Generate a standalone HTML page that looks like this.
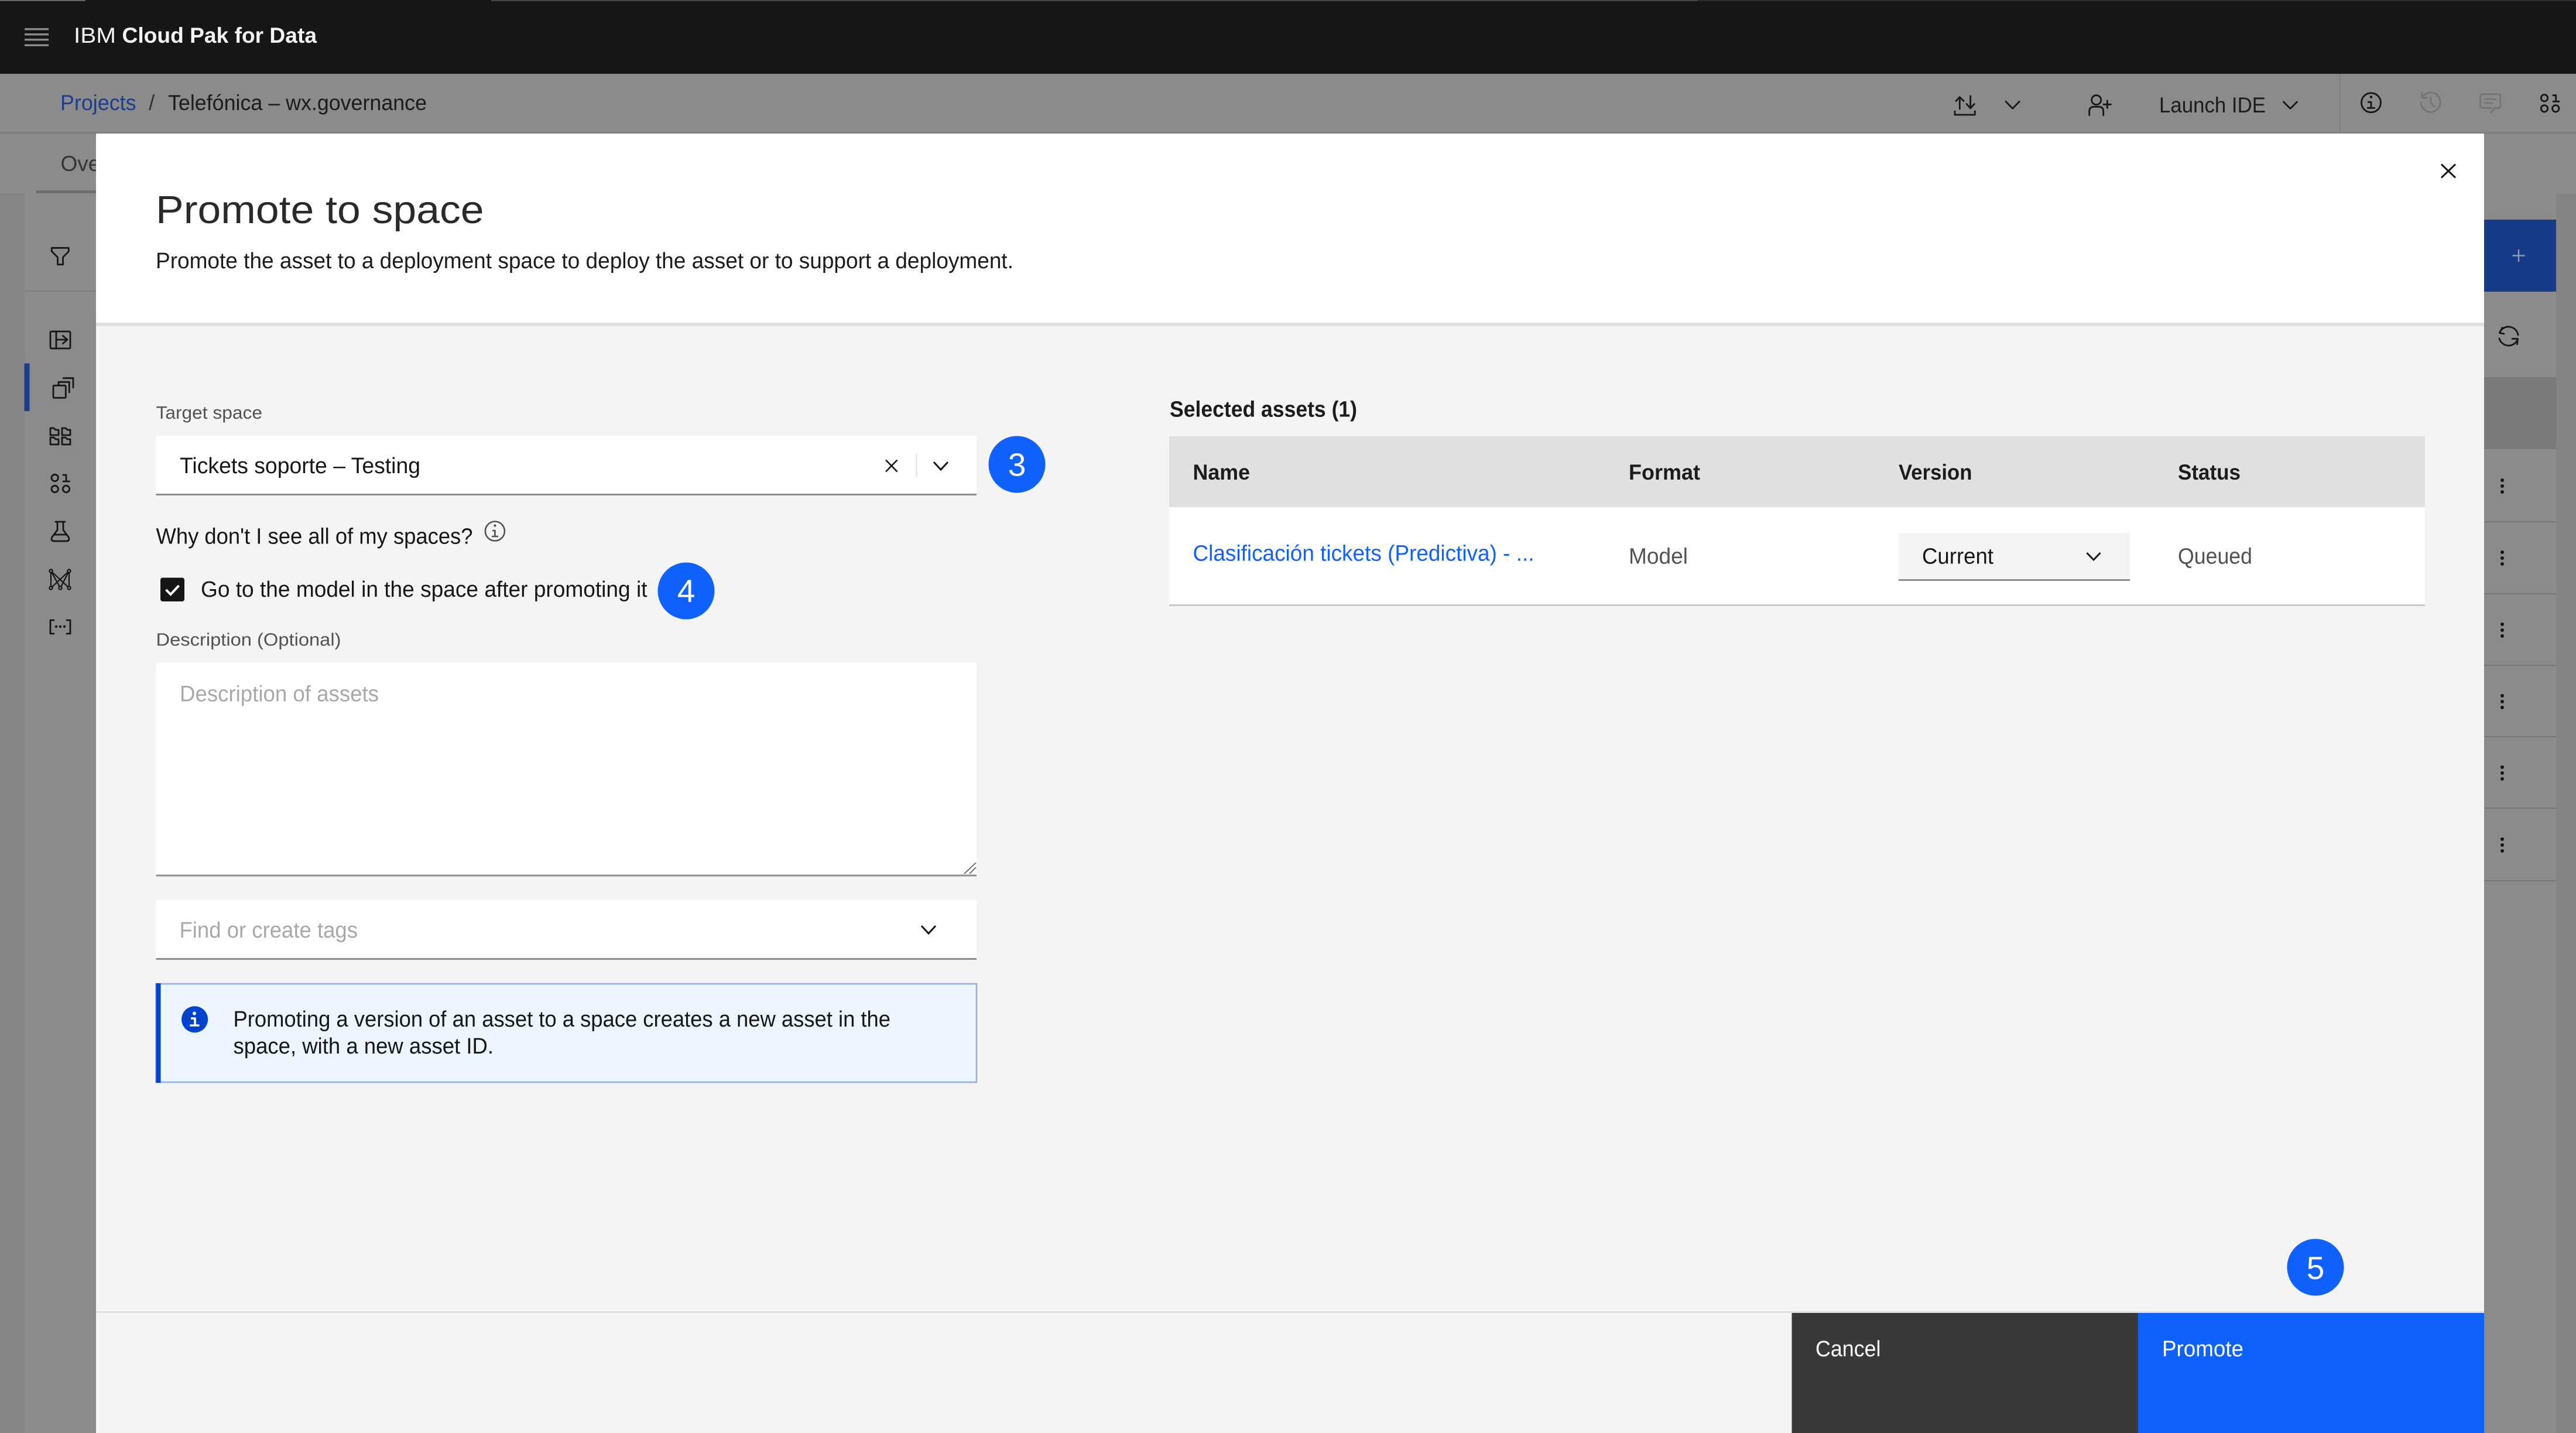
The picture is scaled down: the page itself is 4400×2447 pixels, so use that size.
<!DOCTYPE html>
<html lang="en">
<head>
<meta charset="utf-8">
<title>Promote to space</title>
<style>
html,body{margin:0;padding:0;background:#8b8b8b;width:4400px;height:2447px;overflow:hidden}
svg{display:block;font-family:"Liberation Sans",Arial,sans-serif}
.i{fill:none;stroke:#161616;stroke-width:2.8;stroke-linecap:round;stroke-linejoin:round}
.g{fill:none;stroke:#747474;stroke-width:2.8;stroke-linecap:round;stroke-linejoin:round}
text{white-space:pre}
</style>
</head>
<body>
<svg xmlns="http://www.w3.org/2000/svg" width="4400" height="2447" viewBox="0 0 4400 2447">
<!-- page background -->
<rect width="4400" height="2447" fill="#8b8b8b"/>
<rect x="0" y="330" width="41" height="2117" fill="#858585"/>
<rect x="4366" y="330" width="34" height="2117" fill="#848484"/>

<!-- top header -->
<rect width="4400" height="126" fill="#161616"/>
<rect x="0" y="0" width="146" height="2" fill="#666"/>
<rect x="839" y="0" width="2061" height="2" fill="#444"/>
<rect x="2900" y="0" width="1500" height="2" fill="#2c2c2c"/>
<g fill="#8a8a8a">
<rect x="42" y="48" width="41" height="3.5"/>
<rect x="42" y="57" width="41" height="3.5"/>
<rect x="42" y="66" width="41" height="3.5"/>
<rect x="42" y="75.5" width="41" height="3.5"/>
</g>
<text x="126" y="73" font-size="37" fill="#f4f4f4" textLength="72" lengthAdjust="spacingAndGlyphs">IBM</text>
<text x="208.5" y="73" font-size="37" font-weight="700" fill="#f4f4f4" textLength="332.5" lengthAdjust="spacingAndGlyphs">Cloud Pak for Data</text>

<!-- breadcrumb bar -->
<rect x="0" y="225.5" width="4400" height="3" fill="#7c7c7c"/>
<rect x="3996" y="126" width="2" height="100" fill="#7f7f7f"/>
<text x="103" y="188" font-size="37" fill="#1b3f8e" textLength="129.5" lengthAdjust="spacingAndGlyphs">Projects</text>
<text x="254" y="188" font-size="37" fill="#333">/</text>
<text x="287" y="188" font-size="37" fill="#1c1c1c" textLength="442" lengthAdjust="spacingAndGlyphs">Telefónica – wx.governance</text>

<!-- toolbar icons -->
<path class="i" d="M3347.3 186V166M3341 172.5L3347.3 165.7L3354 172.5M3365.7 164V185M3359 177.5L3365.7 185L3372.3 177.5M3339 190V196H3373.3V190"/>
<path class="i" d="M3426 173.3L3437.7 185.3L3449.3 173.3"/>
<circle class="i" cx="3580.7" cy="170.7" r="8"/>
<path class="i" d="M3568.7 196.7V190Q3568.7 182.3 3577 182.3H3584.5Q3592.7 182.3 3592.7 190V196.7M3593 178.3H3605.5M3599.3 172V184.5"/>
<text x="3688" y="192" font-size="37" fill="#1c1c1c" textLength="182" lengthAdjust="spacingAndGlyphs">Launch IDE</text>
<path class="i" d="M3900.5 174L3912 185.5L3923.5 174"/>

<circle class="i" cx="4050" cy="175.3" r="16.5"/>
<circle cx="4050" cy="165.7" r="2.2" fill="#161616"/>
<path class="i" d="M4045.3 174.3H4050V184.3M4044.3 184.3H4055.7"/>

<path class="g" d="M4138.3 165A16.5 16.5 0 1 1 4135.2 175.3M4137 158V167H4145M4151.7 166.5V175L4157.7 181.7"/>
<path class="g" d="M4255.5 184.3H4239.5Q4236.7 184.3 4236.7 181.6V163.7Q4236.7 161 4239.5 161H4268Q4270.7 161 4270.7 163.7V181.6Q4270.7 184.3 4268 184.3H4260.7L4255 192.3M4244 169H4263M4244 176H4256"/>

<circle class="i" cx="4346" cy="167.3" r="5.7"/>
<circle class="i" cx="4346" cy="185.3" r="5.7"/>
<circle class="i" cx="4365.3" cy="185.3" r="5.7"/>
<path class="i" d="M4361 162.7H4365.7V173.3M4361 173.3H4371"/>

<!-- tabs -->
<text x="103.5" y="292" font-size="37" fill="#353535">Overview</text>
<rect x="62" y="325" width="102" height="5" fill="#6e6e6e"/>

<!-- left rail -->
<rect x="41" y="496" width="123" height="2" fill="#7f7f7f"/>
<path class="i" d="M88.3 423.3H117.3V429.3L107.5 439.3V451.7H98.5V439.3L88.3 429.3Z"/>
<rect x="41.5" y="620.5" width="9" height="81.5" fill="#1a3e8c"/>
<rect class="i" x="86" y="566" width="34" height="29" rx="1.5"/>
<path class="i" d="M96 566V595M96.7 580H115M107.3 573.3L115 580L107.3 586.7"/>
<rect class="i" x="91" y="658.3" width="21.3" height="21" rx="1.5"/>
<path class="i" d="M100 658V652.3H118.3V670M108.3 645.7H125V661.7"/>
<path class="i" d="M86 743V731H92L95 734H100V743ZM106 743V731H112L115 734H120V743ZM86 759V747H92L95 750H100V759ZM106 759V747H112L115 750H120V759Z"/>
<circle class="i" cx="93.7" cy="816" r="5.7"/>
<circle class="i" cx="93.7" cy="835" r="5.7"/>
<circle class="i" cx="113" cy="835" r="5.7"/>
<path class="i" d="M108 811H113V822M108 822H118.5"/>
<path class="i" d="M95 891H111M98 891V905L89 917Q86 924 93 924H113Q120 924 117 917L108 905V891M92 913H114"/>
<path class="i" style="stroke-width:2.2" d="M87 975V1004M118 975V1004M87 975L103 1004M118 975L103 1004M87 975L118 1004M118 975L87 1004"/>
<g fill="#8b8b8b" stroke="#161616" stroke-width="2.2">
<circle cx="87" cy="975" r="2.6"/><circle cx="118" cy="975" r="2.6"/>
<circle cx="87" cy="1004" r="2.6"/><circle cx="103" cy="1004" r="2.6"/><circle cx="118" cy="1004" r="2.6"/>
</g>
<path class="i" d="M92 1059H86V1082H92M114 1059H120V1082H114"/>
<circle cx="96" cy="1070" r="2.2" fill="#161616"/><circle cx="103" cy="1070" r="2.2" fill="#161616"/><circle cx="110" cy="1070" r="2.2" fill="#161616"/>

<!-- right rail behind modal -->
<rect x="4243" y="375" width="123" height="123" fill="#163b89"/>
<path d="M4302 426V447M4291.5 436.5H4312.5" stroke="#8f9ab0" stroke-width="2.4" fill="none"/>
<path class="i" d="M4269.5 568A16.5 16.5 0 0 1 4301 572M4274 559.5L4269.5 568.5L4277 570M4269 578A16.5 16.5 0 0 0 4300.5 579M4291 578.5H4300.5L4299.5 588"/>
<rect x="4243" y="644" width="123" height="123" fill="#7a7a7a"/>
<g fill="#767676">
<rect x="4243" y="890" width="123" height="2"/>
<rect x="4243" y="1013" width="123" height="2"/>
<rect x="4243" y="1135" width="123" height="2"/>
<rect x="4243" y="1257" width="123" height="2"/>
<rect x="4243" y="1379" width="123" height="2"/>
<rect x="4243" y="1503" width="123" height="2"/>
</g>
<g fill="#161616">
<circle cx="4274" cy="820" r="3"/><circle cx="4274" cy="830" r="3"/><circle cx="4274" cy="840" r="3"/>
<circle cx="4274" cy="943" r="3"/><circle cx="4274" cy="953" r="3"/><circle cx="4274" cy="963" r="3"/>
<circle cx="4274" cy="1066" r="3"/><circle cx="4274" cy="1076" r="3"/><circle cx="4274" cy="1086" r="3"/>
<circle cx="4274" cy="1188" r="3"/><circle cx="4274" cy="1198" r="3"/><circle cx="4274" cy="1208" r="3"/>
<circle cx="4274" cy="1310" r="3"/><circle cx="4274" cy="1320" r="3"/><circle cx="4274" cy="1330" r="3"/>
<circle cx="4274" cy="1433" r="3"/><circle cx="4274" cy="1443" r="3"/><circle cx="4274" cy="1453" r="3"/>
</g>

<!-- modal -->
<rect x="164" y="228" width="4079" height="2219" fill="#f4f4f4"/>
<rect x="164" y="228" width="4079" height="323" fill="#ffffff"/>
<rect x="164" y="551" width="4079" height="6" fill="#e0e0e0"/>
<text x="266" y="381" font-size="67" fill="#2a2a2a" textLength="560.5" lengthAdjust="spacingAndGlyphs">Promote to space</text>
<text x="266" y="458" font-size="38" fill="#1c1c1c" textLength="1465" lengthAdjust="spacingAndGlyphs">Promote the asset to a deployment space to deploy the asset or to support a deployment.</text>
<path d="M4170 280.5L4194 303.5M4194 280.5L4170 303.5" stroke="#161616" stroke-width="3" fill="none"/>

<!-- form left -->
<text x="266.5" y="715" font-size="31" fill="#525252" textLength="181.5" lengthAdjust="spacingAndGlyphs">Target space</text>
<rect x="266.5" y="744" width="1401.5" height="100" fill="#fff"/>
<rect x="266.5" y="843" width="1401.5" height="3" fill="#8d8d8d"/>
<text x="307" y="808" font-size="38" fill="#161616" textLength="411" lengthAdjust="spacingAndGlyphs">Tickets soporte – Testing</text>
<path d="M1513 785.5L1532.5 805.5M1532.5 785.5L1513 805.5" stroke="#161616" stroke-width="2.6" fill="none"/>
<rect x="1564.5" y="775" width="2" height="40" fill="#e0e0e0"/>
<path d="M1595 789L1607 802L1619 789" stroke="#161616" stroke-width="3" fill="none"/>
<circle cx="1737" cy="793" r="48.5" fill="#0f62fe"/>
<text x="1737" y="812.7" font-size="55" fill="#fff" text-anchor="middle">3</text>

<text x="266.5" y="928.5" font-size="38" fill="#161616" textLength="541" lengthAdjust="spacingAndGlyphs">Why don't I see all of my spaces?</text>
<circle cx="845.4" cy="907" r="16.5" fill="none" stroke="#525252" stroke-width="2.6"/>
<circle cx="845.4" cy="897.5" r="2.1" fill="#525252"/>
<path d="M841 906H845.4V916M840 916H851" stroke="#525252" stroke-width="2.6" fill="none"/>

<rect x="274" y="986.5" width="41" height="40.5" rx="4" fill="#161616"/>
<path d="M283.5 1007L291.5 1015L305.5 1000" stroke="#fff" stroke-width="4" fill="none"/>
<text x="343" y="1019" font-size="38" fill="#161616" textLength="762.5" lengthAdjust="spacingAndGlyphs">Go to the model in the space after promoting it</text>
<circle cx="1172" cy="1009" r="48.5" fill="#0f62fe"/>
<text x="1172" y="1028" font-size="55" fill="#fff" text-anchor="middle">4</text>

<text x="266.5" y="1102.5" font-size="31" fill="#525252" textLength="316" lengthAdjust="spacingAndGlyphs">Description (Optional)</text>
<rect x="266.5" y="1131.5" width="1401.5" height="362" fill="#fff"/>
<rect x="266.5" y="1493.5" width="1401.5" height="3" fill="#8d8d8d"/>
<text x="307" y="1197.5" font-size="38" fill="#a8a8a8" textLength="340" lengthAdjust="spacingAndGlyphs">Description of assets</text>
<path d="M1647 1492L1667 1473M1656 1492L1667 1481" stroke="#666" stroke-width="1.8" fill="none"/>

<rect x="266.5" y="1536.5" width="1401.5" height="100" fill="#fff"/>
<rect x="266.5" y="1636" width="1401.5" height="3" fill="#8d8d8d"/>
<text x="306.5" y="1601" font-size="38" fill="#a8a8a8" textLength="304.5" lengthAdjust="spacingAndGlyphs">Find or create tags</text>
<path d="M1574 1581L1586 1594L1598 1581" stroke="#161616" stroke-width="3" fill="none"/>

<!-- notification -->
<rect x="266.5" y="1680" width="1401.5" height="168" fill="#edf5ff"/>
<rect x="266.5" y="1680" width="1401.5" height="168" fill="none" stroke="#93afe8" stroke-width="2.6"/>
<rect x="266.5" y="1679" width="8" height="170" fill="#0043ce"/>
<circle cx="332.6" cy="1740.7" r="22.5" fill="#0043ce"/>
<circle cx="332" cy="1730.5" r="3" fill="#fff"/>
<path d="M326 1739H333V1751M324.5 1751H340.5" stroke="#fff" stroke-width="3.6" fill="none"/>
<text x="398.5" y="1753" font-size="38" fill="#161616" textLength="1122.5" lengthAdjust="spacingAndGlyphs">Promoting a version of an asset to a space creates a new asset in the</text>
<text x="398.5" y="1799" font-size="38" fill="#161616" textLength="444.5" lengthAdjust="spacingAndGlyphs">space, with a new asset ID.</text>

<!-- table -->
<text x="1998" y="711.5" font-size="38" font-weight="700" fill="#1c1c1c" textLength="320" lengthAdjust="spacingAndGlyphs">Selected assets (1)</text>
<rect x="1997" y="745" width="2145" height="121" fill="#e0e0e0"/>
<rect x="1997" y="866" width="2145" height="166" fill="#fff"/>
<rect x="1997" y="1032" width="2145" height="3" fill="#c9c9c9"/>
<g font-size="37" font-weight="700" fill="#1c1c1c">
<text x="2037.5" y="819" textLength="97.5" lengthAdjust="spacingAndGlyphs">Name</text>
<text x="2782" y="819" textLength="122" lengthAdjust="spacingAndGlyphs">Format</text>
<text x="3243" y="819" textLength="125.5" lengthAdjust="spacingAndGlyphs">Version</text>
<text x="3720" y="819" textLength="107" lengthAdjust="spacingAndGlyphs">Status</text>
</g>
<text x="2037.5" y="957.5" font-size="38" fill="#0f62fe" textLength="583" lengthAdjust="spacingAndGlyphs">Clasificación tickets (Predictiva) - ...</text>
<text x="2782" y="962.5" font-size="38" fill="#525252" textLength="101" lengthAdjust="spacingAndGlyphs">Model</text>
<rect x="3243" y="910" width="395" height="79" fill="#f4f4f4"/>
<rect x="3243" y="989" width="395" height="3" fill="#8d8d8d"/>
<text x="3283" y="962.5" font-size="38" fill="#161616" textLength="122" lengthAdjust="spacingAndGlyphs">Current</text>
<path d="M3564.5 944L3576 956L3587.5 944" stroke="#161616" stroke-width="3" fill="none"/>
<text x="3720" y="962.5" font-size="38" fill="#525252" textLength="127" lengthAdjust="spacingAndGlyphs">Queued</text>

<!-- footer -->
<rect x="164" y="2239" width="4079" height="3" fill="#e0e0e0"/>
<circle cx="3955" cy="2164" r="48.5" fill="#0f62fe"/>
<text x="3955" y="2184" font-size="55" fill="#fff" text-anchor="middle">5</text>
<rect x="3060.5" y="2242" width="591.5" height="205" fill="#393939"/>
<rect x="3652" y="2242" width="591" height="205" fill="#0f62fe"/>
<text x="3101" y="2316" font-size="38" fill="#fff" textLength="111.5" lengthAdjust="spacingAndGlyphs">Cancel</text>
<text x="3693" y="2316" font-size="38" fill="#fff" textLength="139" lengthAdjust="spacingAndGlyphs">Promote</text>
</svg>
</body>
</html>
